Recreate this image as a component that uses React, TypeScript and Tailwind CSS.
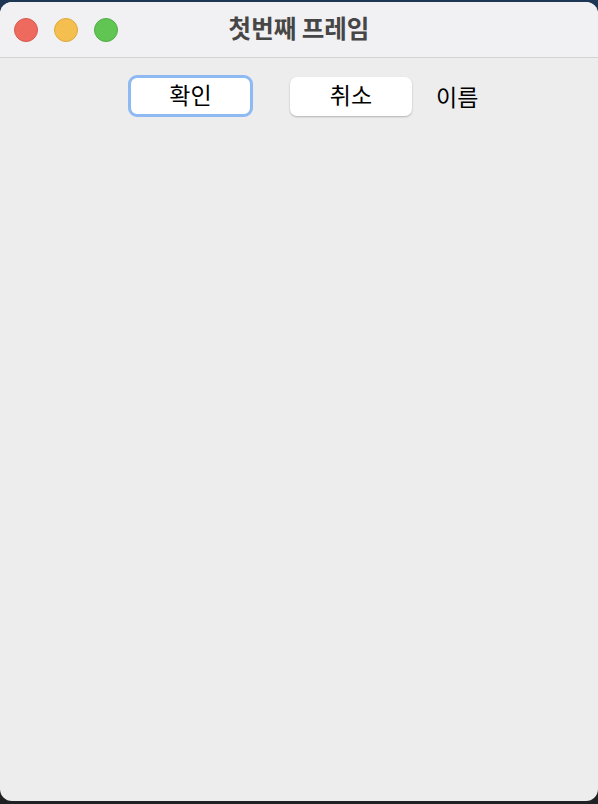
import React from 'react';

const font = { fontFamily: '"Noto Sans CJK KR", "Noto Sans", sans-serif' };

const App: React.FC = () => {
  return (
    <div className="w-[598px] h-[804px] bg-gradient-to-b from-[#1d3654] via-[#232629] to-[#1f2123] pt-[2px] pb-[3px]" style={font}>
      <div className="h-full bg-[#ededed] rounded-[12px] overflow-hidden flex flex-col">
        {/* title bar */}
        <div className="relative h-[56px] bg-[#f1f0f3] border-b border-[#d3d3d3] flex items-center justify-center shrink-0">
          <div className="absolute left-[14px] top-[16px] flex gap-[16px]">
            <span className="w-[24px] h-[24px] rounded-full bg-[#ee6a5f] border border-[#d9584e]" />
            <span className="w-[24px] h-[24px] rounded-full bg-[#f5bf4f] border border-[#dea93d]" />
            <span className="w-[24px] h-[24px] rounded-full bg-[#61c554] border border-[#50ad45]" />
          </div>
          <span className="text-[24.5px] font-bold text-[#464646] leading-none -mt-[2px]">첫번째 프레임</span>
        </div>

        {/* content */}
        <div className="flex items-center pl-[128px] pt-[17px]">
          <button className="w-[125px] h-[42px] rounded-[9px] bg-white border-[3px] border-[#8dbaf2] text-[23px] text-black leading-none flex items-center justify-center pb-[3px]">
            확인
          </button>
          <button className="ml-[37px] w-[122px] h-[39px] rounded-[7px] bg-white shadow-[0_1px_2px_rgba(0,0,0,0.25)] text-[23px] text-black leading-none flex items-center justify-center pb-[3px]">
            취소
          </button>
          <span className="ml-[24px] text-[23px] text-black leading-none">이름</span>
        </div>
      </div>
    </div>
  );
};

export default App;
